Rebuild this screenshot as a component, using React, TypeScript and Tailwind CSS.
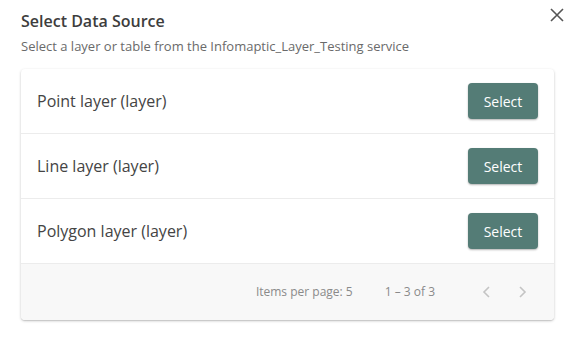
import React from 'react';

const layers = ['Point layer (layer)', 'Line layer (layer)', 'Polygon layer (layer)'];

const App: React.FC = () => {
  return (
    <div className="w-[575px] h-[340px] bg-white font-['Open_Sans',sans-serif] relative">
      <button className="absolute right-[11px] top-[8px] w-[14px] h-[14px] text-[#555]">
        <svg viewBox="0 0 14 14" className="w-[14px] h-[14px]" fill="none" stroke="currentColor" strokeWidth="1.6">
          <path d="M1 1 L13 13 M13 1 L1 13" />
        </svg>
      </button>

      <div className="px-[21px] pt-[10px]">
        <h2 className="text-[16px] leading-[22px] font-semibold text-[#3d3d3d]">Select Data Source</h2>
        <p className="mt-[5px] text-[13px] leading-[18px] text-[#6a6a6a]">
          Select a layer or table from the Infomaptic_Layer_Testing service
        </p>

        <div className="mt-[14px] w-[533px] rounded-[4px] bg-white shadow-[0_1px_3px_rgba(0,0,0,0.2),0_1px_1px_rgba(0,0,0,0.1)] overflow-hidden">
          {layers.map((name) => (
            <div key={name} className="h-[65px] flex items-center justify-between pl-[16px] pr-[16px] border-b border-[#ececec]">
              <span className="text-[16px] text-[#444]">{name}</span>
              <button className="w-[70px] h-[36px] rounded-[4px] bg-[#547c76] text-white text-[14px] shadow-[0_1px_2px_rgba(0,0,0,0.3)]">
                Select
              </button>
            </div>
          ))}
          <div className="h-[56px] bg-[#f8f8f8] flex items-center justify-end pr-[27px] text-[12px] text-[#8a8a8a]">
            <span>Items per page: 5</span>
            <span className="ml-[32px]">1 – 3 of 3</span>
            <div className="ml-[47px] flex items-center gap-[29px] text-[#c4c4c4]">
              <svg viewBox="0 0 8 12" className="w-[8px] h-[12px]" fill="none" stroke="currentColor" strokeWidth="1.6">
                <path d="M7 1 L2 6 L7 11" />
              </svg>
              <svg viewBox="0 0 8 12" className="w-[8px] h-[12px]" fill="none" stroke="currentColor" strokeWidth="1.6">
                <path d="M1 1 L6 6 L1 11" />
              </svg>
            </div>
          </div>
        </div>
      </div>
    </div>
  );
};

export default App;
